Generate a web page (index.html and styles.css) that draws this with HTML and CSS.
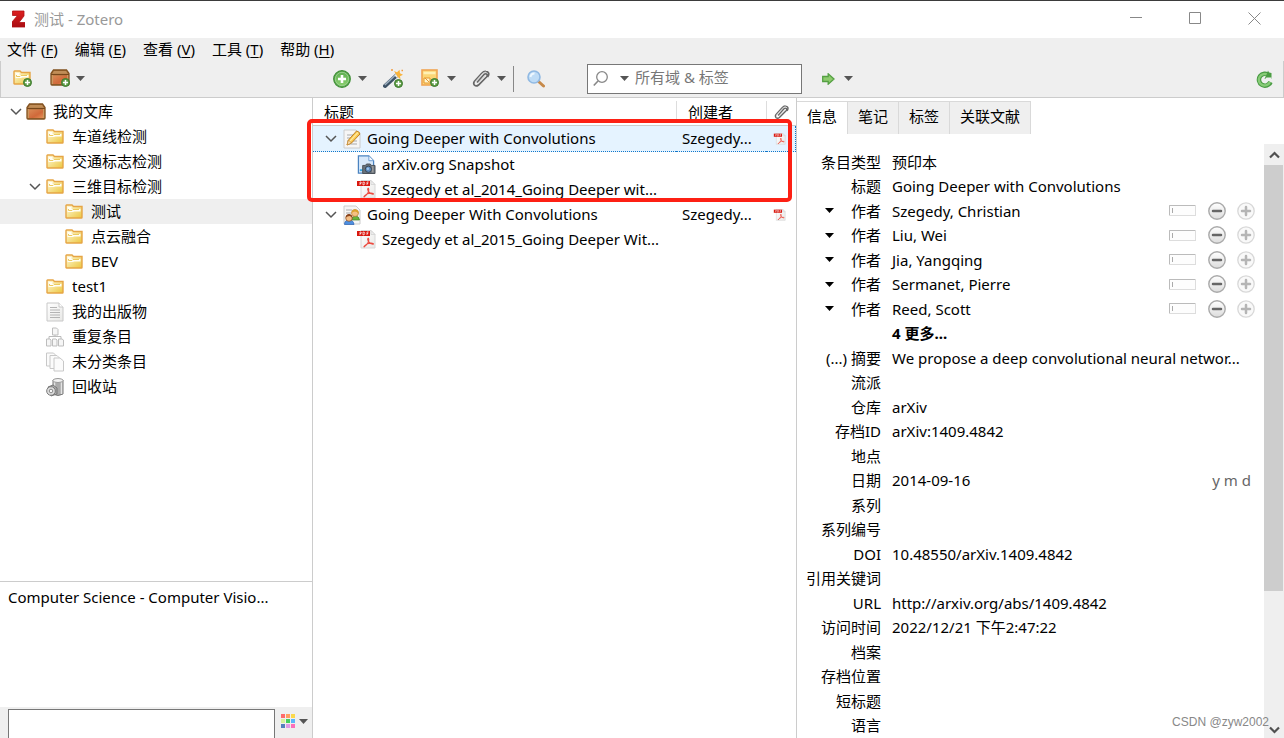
FILE: index.html
```html
<!DOCTYPE html>
<html lang="zh-CN">
<head>
<meta charset="utf-8">
<title>测试 - Zotero</title>
<link rel="stylesheet" href="styles.css">
</head>
<body>
<svg class="defs" aria-hidden="true">
  <defs>
    <linearGradient id="gFolder" x1="0" y1="0" x2="1" y2="1"><stop offset="0" stop-color="#fffbe0"/><stop offset="1" stop-color="#ecc63c"/></linearGradient>
    <linearGradient id="gBox" x1="0" y1="0" x2="1" y2="1"><stop offset="0" stop-color="#d98a55"/><stop offset="0.6" stop-color="#d0693a"/><stop offset="1" stop-color="#e58f56"/></linearGradient>
    <linearGradient id="gGreen" x1="0" y1="0" x2="0" y2="1"><stop offset="0" stop-color="#5faf52"/><stop offset="1" stop-color="#8ad06f"/></linearGradient>
    <linearGradient id="gRed" x1="0" y1="0" x2="0" y2="1"><stop offset="0" stop-color="#de2020"/><stop offset="1" stop-color="#a90d12"/></linearGradient>
    <linearGradient id="gGrey" x1="0" y1="0" x2="0" y2="1"><stop offset="0" stop-color="#fff"/><stop offset="1" stop-color="#dcdcdc"/></linearGradient>
    <linearGradient id="gPage" x1="0" y1="0" x2="1" y2="1"><stop offset="0" stop-color="#fff"/><stop offset="1" stop-color="#e8e8e6"/></linearGradient>
  </defs>
  <symbol id="plus" viewBox="0 0 9 9"><circle cx="4.500" cy="4.500" r="4" fill="#5d9c45" stroke="#3d7a2f"/><path d="M4.500 2v5M2 4.500h5" stroke="#fff" stroke-width="1.500"/></symbol>
  <symbol id="folder" viewBox="0 0 18 15"><path d="M1 13.500V1.500Q1 1 1.500 1H7l1.500 1.500h8.500V13.500Q17 14 16.500 14H1.500Q1 14 1 13.500Z" fill="url(#gFolder)" stroke="#e6a545" stroke-width="1.400"/><path d="M2.500 8V3h4v2h9v2.500H9L8 8Z" fill="#fffef5"/><path d="M3.500 5v1.500H7L8 5.500h6" fill="none" stroke="#eccb62"/></symbol>
  <symbol id="box" viewBox="0 0 20 17"><path d="M3.500 1h13L19 4.500V15q0 1-1 1H2q-1 0-1-1V4.500Z" fill="#a9733c" stroke="#81511f" stroke-width="1.300"/><path d="M4 2h12l1.800 2.800H2.200Z" fill="#c08d57"/><path d="M1 5.500h18" stroke="#76471b"/><rect x="3" y="6.500" width="14" height="8.500" fill="url(#gBox)"/><path d="M2.300 6v9M17.700 6v9" stroke="#d4a068"/></symbol>
  <symbol id="down" viewBox="0 0 9 5"><path d="M0 0h9L4.500 5Z" fill="currentColor"/></symbol>
  <symbol id="chev" viewBox="0 0 12 8"><path d="M1 1l5 5 5-5" fill="none" stroke="#555" stroke-width="1.500"/></symbol>
  <symbol id="clip" viewBox="0 0 18 18"><path d="M5 12.500L12 4.500q1.800-1.500 3 0 .7 1.200-.5 2.500L6.500 15q-2.200 1.800-4 .2-1.600-1.800 0-3.900L9.500 3.500q2.400-2.500 4.300-2.200 2 .2 2.700 1.500.9 2-1 4.200" fill="none" stroke="#666" stroke-width="1.700"/><path d="M3 12L10 4q2-2 4-2M6 13L13 5.500" fill="none" stroke="#d0d0d0" stroke-width=".9"/></symbol>
  <symbol id="pdf" viewBox="0 0 20 19"><path d="M5 .5h10l4 4V18H5Z" fill="url(#gPage)" stroke="#d8d8d8"/><path d="M15 .5v4h4Z" fill="#eee" stroke="#d0d0d0" stroke-width=".7"/><path d="M1 1h13v5H1Z" fill="#d9180f"/><path d="M4 5V2h1q1 .8 0 1.500H4M7 5V2q2-.2 1.700 1.500Q8.700 5 7 5M11 5V2h1.700M11 3.500h1.200" fill="none" stroke="#fff" stroke-width=".7"/><path d="M12 8q-.8 1.200.2 3 1.300 2.500 4.800 3.300 1-.7-.8-1.100-3.500-.3-5.800 1.200-2.200 1.700-2.700 2.600M12 8q1.500.8.200 4.200-1.300 2.800-4.500 5" fill="none" stroke="#ec4b40" stroke-width="1.100"/></symbol>
  <symbol id="page" viewBox="0 0 18 20"><path d="M1 1h12l4 4v14H1Z" fill="url(#gPage)" stroke="#c8c8c8"/><path d="M13 1v4h4" fill="#fff" stroke="#c8c8c8"/><path d="M4 5.500h7M4 8h10M4 10.500h10M4 13h10M4 15.500h10" stroke="#b4b4b4"/></symbol>
  <symbol id="swatch" viewBox="0 0 27 11"><rect x=".5" y=".5" width="26" height="10" fill="#fdfdfd" stroke="#ddd"/><path d="M.5 10V.5H26" stroke="#bbb" fill="none"/><path d="M3.500 3v5" stroke="#aaa"/></symbol>
  <symbol id="minus" viewBox="0 0 18 18"><circle cx="9" cy="9" r="8.200" fill="url(#gGrey)" stroke="#aaa" stroke-width="1.400"/><path d="M5 9h8" stroke="#666" stroke-width="2.500" stroke-linecap="round"/></symbol>
  <symbol id="add" viewBox="0 0 18 18"><circle cx="9" cy="9" r="8.200" fill="#f9f9f9" stroke="#d8d8d8" stroke-width="1.300"/><path d="M5 9h8M9 5v8" stroke="#b5b5b5" stroke-width="2.500" stroke-linecap="round"/></symbol>
</svg>

<header class="titlebar">
  <svg class="logo" viewBox="0 0 13 18"><path d="M.5 1H12v5L7 12.500H13V17H0v-5L5.500 5.500H.5Z" fill="url(#gRed)" stroke="#b01014" stroke-width=".8"/></svg>
  <h1 class="title">测试 - Zotero</h1>
  <div class="window-buttons">
    <button aria-label="最小化"><svg width="13" height="13"><path d="M0 5.500h12" stroke="#888"/></svg></button>
    <button aria-label="最大化"><svg width="13" height="13"><path d="M.5 .5h11v11H.5Z" fill="none" stroke="#888"/></svg></button>
    <button aria-label="关闭"><svg width="13" height="13"><path d="M.5 .5l12 12M12.500 .5l-12 12" stroke="#888"/></svg></button>
  </div>
</header>

<nav class="menubar">
  <button>文件 (<u>F</u>)</button><button>编辑 (<u>E</u>)</button><button>查看 (<u>V</u>)</button><button>工具 (<u>T</u>)</button><button>帮助 (<u>H</u>)</button>
</nav>

<div class="toolbar">
  <div class="tools tools-left">
    <button aria-label="新建分类"><svg width="20" height="19"><use href="#folder" y="1" width="18" height="15"/><use href="#plus" x="10" y="9" width="9" height="9"/></svg></button>
    <button class="with-menu" aria-label="新建文库"><svg width="21" height="19"><use href="#box" width="20" height="17"/><use href="#plus" x="11" y="9" width="9" height="9"/></svg><svg class="down"><use href="#down"/></svg></button>
  </div>
  <div class="tools tools-mid">
    <button class="with-menu" aria-label="新建条目"><svg width="18" height="18"><circle cx="9" cy="9" r="8.300" fill="#58a64b" stroke="#3f8f36" stroke-width="1.200"/><circle cx="9" cy="9" r="6.700" fill="url(#gGreen)" stroke="#a7d79a" stroke-width=".8"/><path d="M9 5v8M5 9h8" stroke="#fff" stroke-width="2.600"/></svg><svg class="down"><use href="#down"/></svg></button>
    <button aria-label="通过标识符添加条目"><svg width="22" height="20"><path d="M2 17L14 6" stroke="#3d5266" stroke-width="4" stroke-linecap="round"/><path d="M1.800 16L13 5.500" stroke="#9fb0bf" stroke-width="1.500"/><path d="M12.500 7.500l2.500-2" stroke="#e8eef2" stroke-width="3.500"/><path d="M11 2l3 1.200 2.500-2.400.5 3.500 3 1.500-3 1.500.5 3-3-2.500Z" fill="#f9b43c"/><path d="M8 1h2M18.500 1.500h1.500" stroke="#f29a3d" stroke-width="1.500"/><use href="#plus" x="11" y="10" width="9" height="9"/></svg></button>
    <button class="with-menu" aria-label="新建笔记"><svg width="19" height="19"><rect x="1" y="1" width="15" height="15" fill="#fbd676" stroke="#f0a553" stroke-width="1.600"/><path d="M2.500 4h12" stroke="#fff1b5" stroke-width="2.500"/><path d="M3 9v5h6V9Z" fill="#fff6cf" stroke="#e6982f"/><path d="M4 9l4 4" stroke="#e6982f"/><use href="#plus" x="9" y="9" width="9" height="9"/></svg><svg class="down"><use href="#down"/></svg></button>
    <button class="with-menu" aria-label="添加附件"><svg width="18" height="18"><use href="#clip"/></svg><svg class="down"><use href="#down"/></svg></button>
    <span class="separator"></span>
    <button class="find" aria-label="高级搜索"><svg width="18" height="18"><path d="M11 11l5.500 5" stroke="#c78a4a" stroke-width="3" stroke-linecap="round"/><circle cx="7" cy="7" r="6" fill="#bfdcf6" stroke="#90b9e3" stroke-width="1.600"/><path d="M3.500 7q.5-3.500 4-3.500" stroke="#edf7ff" fill="none" stroke-width="2"/></svg></button>
    <div class="search">
      <svg width="16" height="16"><circle cx="9" cy="6" r="5.300" fill="none" stroke="#888" stroke-width="1.300"/><path d="M5 10L.8 14.500" stroke="#888" stroke-width="1.600"/></svg>
      <svg class="down"><use href="#down"/></svg>
      <input type="search" aria-label="搜索" placeholder="所有域 &amp; 标签">
    </div>
  </div>
  <div class="tools tools-right">
    <button class="with-menu locate" aria-label="定位"><svg width="13" height="12"><path d="M.7 3.500h5.500V.8L12 6l-5.800 5.200V8.500H.7Z" fill="#8dcb6d" stroke="#55a043" stroke-width="1.300"/></svg><svg class="down"><use href="#down"/></svg></button>
    <button class="sync" aria-label="同步"><svg width="17" height="18"><path d="M14.500 12A6 6 0 1 1 13 5.200" fill="none" stroke="#489a42" stroke-width="4.500"/><path d="M14 12A5.800 5.800 0 1 1 12 5" fill="none" stroke="#87cb77" stroke-width="2.400"/><path d="M8.500 9L15.500 9V3L13 2.500l-1-2-1 3Z" fill="#4b9d43"/><path d="M8.500 9.500h7V7.500h-5Z" fill="#efefef"/></svg></button>
  </div>
</div>

<main class="panes">
  <section class="collections">
    <ul class="tree">
      <li class="root"><svg class="chev"><use href="#chev"/></svg><svg class="ico-box"><use href="#box"/></svg>我的文库</li>
      <li class="l1"><svg class="ico-folder"><use href="#folder"/></svg>车道线检测</li>
      <li class="l1"><svg class="ico-folder"><use href="#folder"/></svg>交通标志检测</li>
      <li class="l1 open"><svg class="chev"><use href="#chev"/></svg><svg class="ico-folder"><use href="#folder"/></svg>三维目标检测</li>
      <li class="l2 current"><svg class="ico-folder"><use href="#folder"/></svg>测试</li>
      <li class="l2"><svg class="ico-folder"><use href="#folder"/></svg>点云融合</li>
      <li class="l2"><svg class="ico-folder"><use href="#folder"/></svg>BEV</li>
      <li class="l1"><svg class="ico-folder"><use href="#folder"/></svg>test1</li>
      <li class="l1"><svg class="ico-page"><use href="#page"/></svg>我的出版物</li>
      <li class="l1"><svg class="ico-page" viewBox="0 0 18 20"><path d="M9 7v3M3 12v-2.500h12V12" stroke="#bbb" fill="none"/><g fill="#f6f6f6" stroke="#bdbdbd"><path d="M6.500 1h4l1.500 1.500V8H6.500ZM.5 12h3.500l1 1v6H.5ZM6.500 12H10l1 1v6H6.500ZM12.500 12H16l1.500 1v6h-5Z"/></g></svg>重复条目</li>
      <li class="l1"><svg class="ico-page" viewBox="0 0 18 20"><g fill="#fbfbfb" stroke="#c8c8c8"><path d="M.5 1h7l2.500 2.500V14H.5Z"/><path d="M4 3.500h7L13.500 6v10.500H4Z"/><path d="M8 6h6l3.500 3v10H8Z"/></g></svg>未分类条目</li>
      <li class="l1"><svg class="ico-page" viewBox="0 0 18 20"><path d="M7 3v14q5 3 10 0V3Z" fill="#aaa" stroke="#777"/><path d="M8.500 5v12M15.500 5v12" stroke="#e4e4e4" stroke-width="1.500"/><ellipse cx="12" cy="3.500" rx="5" ry="2" fill="#f2f2f2" stroke="#999"/><path d="M2 10l5-2 4 3v6l-6 2Z" fill="#aaa" stroke="#777"/><circle cx="5" cy="14" r="4.300" fill="#e0e0e0" stroke="#777"/><circle cx="5" cy="14" r="1.800" fill="#f8f8f8" stroke="#888"/></svg>回收站</li>
    </ul>
    <div class="tags">
      <button class="tag">Computer Science - Computer Visio...</button>
      <div class="tag-filter">
        <input type="text" aria-label="筛选标签">
        <button class="with-menu" aria-label="标签选项"><svg width="15" height="15"><path fill="#ff6b6b" d="M0 0h4v4H0z"/><path fill="#ff9f60" d="M5 0h4v4H5z"/><path fill="#fbd94c" d="M10 0h4v4h-4z"/><path fill="#d6f29d" d="M0 5h4v4H0z"/><path fill="#45cf5f" d="M5 5h4v4H5z"/><path fill="#5ab8fa" d="M10 5h4v4h-4z"/><path fill="#5580bd" d="M0 10h4v4H0z"/><path fill="#df9ae6" d="M5 10h4v4H5z"/><path fill="#fb70ba" d="M10 10h4v4h-4z"/></svg><svg class="down"><use href="#down"/></svg></button>
      </div>
    </div>
  </section>

  <section class="items">
    <table class="item-table">
      <thead><tr><th class="c-title">标题</th><th class="c-creator">创建者</th><th class="c-clip"><svg width="15" height="15"><use href="#clip"/></svg></th></tr></thead>
      <tbody>
        <tr class="selected"><td><div class="cell"><svg class="chev"><use href="#chev"/></svg><svg class="ico-item" viewBox="0 0 18 20"><path d="M1 1h12l4 4v14H1Z" fill="#f6f6f6" stroke="#ccc"/><path d="M4 6h8M4 9h8M4 12h10M4 15h10" stroke="#aaa"/><path d="M4 16l1.500-5L13.500 2q3 .5 3.500 3L8.500 14Z" fill="#fac850" stroke="#bf8124"/><path d="M4 16l1.500-5 3 3Z" fill="#f8ddb5" stroke="#bf8124" stroke-width=".6"/><path d="M7 12l8-8.500" stroke="#ffeaa0" stroke-width="1.200"/></svg>Going Deeper with Convolutions</div></td><td>Szegedy...</td><td><svg class="ico-pdf-s"><use href="#pdf"/></svg></td></tr>
        <tr><td><div class="cell child"><svg class="ico-pdf" viewBox="0 0 20 20"><path d="M2 1h11l5 5v13H2Z" fill="#d7e8fa" stroke="#4b83c0" stroke-width="1.300"/><path d="M13 1v5h5" fill="#f5faff" stroke="#6b9bd2"/><path d="M3.500 16h3" stroke="#32a8e4" stroke-width="2"/><path d="M6.500 11h3l1-1.500h4l1 1.500h4v8.500h-13Z" fill="#68727c" stroke="#4a4f55"/><path d="M17 11.500v7" stroke="#999" stroke-width="2"/><circle cx="12.500" cy="15" r="3.300" fill="#5d8cc1" stroke="#39434e"/><circle cx="12" cy="14.500" r="1.300" fill="#9cc4ec"/></svg>arXiv.org Snapshot</div></td><td></td><td></td></tr>
        <tr><td><div class="cell child"><svg class="ico-pdf"><use href="#pdf"/></svg>Szegedy et al_2014_Going Deeper wit...</div></td><td></td><td></td></tr>
        <tr><td><div class="cell"><svg class="chev"><use href="#chev"/></svg><svg class="ico-item" viewBox="0 0 18 20"><path d="M1 1h12l4 4v14H1Z" fill="#f6f6f6" stroke="#ccc"/><path d="M3 5h6M3 8h5" stroke="#aaa"/><path d="M8.500 15q.5-4 4-4t4 4Z" fill="#68b53c" stroke="#3f8227" stroke-width=".7"/><circle cx="12" cy="8" r="3.500" fill="#f5c184" stroke="#b37c32" stroke-width=".7"/><path d="M8.500 8q.5-4 4-3.500 3.500.5 3 4-2-2-3.500-2-2 .2-3.500 1.500Z" fill="#dba32c"/><path d="M1.500 19.500q0-4.500 4.500-4.500t5 4.500Z" fill="#4d8fe0" stroke="#2c62b0" stroke-width=".7"/><circle cx="6" cy="13" r="3.300" fill="#f3bd85" stroke="#8a4b1f" stroke-width=".7"/><path d="M2.700 12.500Q3 9 6.200 9q3 .5 3.200 4-1.500-2-3-2-2 0-3.700 1.500Z" fill="#8a431b"/></svg>Going Deeper With Convolutions</div></td><td>Szegedy...</td><td><svg class="ico-pdf-s"><use href="#pdf"/></svg></td></tr>
        <tr><td><div class="cell child"><svg class="ico-pdf"><use href="#pdf"/></svg>Szegedy et al_2015_Going Deeper Wit...</div></td><td></td><td></td></tr>
      </tbody>
    </table>
    <div class="highlight"></div>
  </section>

  <section class="details">
    <div class="tabs" role="tablist">
      <button role="tab" aria-selected="true">信息</button><button role="tab">笔记</button><button role="tab">标签</button><button role="tab">关联文献</button>
    </div>
    <div class="scroll-area">
      <table class="info">
        <tbody>
          <tr><th>条目类型</th><td>预印本</td></tr>
          <tr><th>标题</th><td>Going Deeper with Convolutions</td></tr>
          <tr><th><div class="author"><svg class="down"><use href="#down"/></svg>作者</div></th><td><div class="person">Szegedy, Christian<span class="acts"><button aria-label="切换单字段"><svg width="27" height="11"><use href="#swatch"/></svg></button><button aria-label="删除作者"><svg width="18" height="18"><use href="#minus"/></svg></button><button aria-label="添加作者"><svg width="18" height="18"><use href="#add"/></svg></button></span></div></td></tr>
          <tr><th><div class="author"><svg class="down"><use href="#down"/></svg>作者</div></th><td><div class="person">Liu, Wei<span class="acts"><button aria-label="切换单字段"><svg width="27" height="11"><use href="#swatch"/></svg></button><button aria-label="删除作者"><svg width="18" height="18"><use href="#minus"/></svg></button><button aria-label="添加作者"><svg width="18" height="18"><use href="#add"/></svg></button></span></div></td></tr>
          <tr><th><div class="author"><svg class="down"><use href="#down"/></svg>作者</div></th><td><div class="person">Jia, Yangqing<span class="acts"><button aria-label="切换单字段"><svg width="27" height="11"><use href="#swatch"/></svg></button><button aria-label="删除作者"><svg width="18" height="18"><use href="#minus"/></svg></button><button aria-label="添加作者"><svg width="18" height="18"><use href="#add"/></svg></button></span></div></td></tr>
          <tr><th><div class="author"><svg class="down"><use href="#down"/></svg>作者</div></th><td><div class="person">Sermanet, Pierre<span class="acts"><button aria-label="切换单字段"><svg width="27" height="11"><use href="#swatch"/></svg></button><button aria-label="删除作者"><svg width="18" height="18"><use href="#minus"/></svg></button><button aria-label="添加作者"><svg width="18" height="18"><use href="#add"/></svg></button></span></div></td></tr>
          <tr><th><div class="author"><svg class="down"><use href="#down"/></svg>作者</div></th><td><div class="person">Reed, Scott<span class="acts"><button aria-label="切换单字段"><svg width="27" height="11"><use href="#swatch"/></svg></button><button aria-label="删除作者"><svg width="18" height="18"><use href="#minus"/></svg></button><button aria-label="添加作者"><svg width="18" height="18"><use href="#add"/></svg></button></span></div></td></tr>
          <tr><th></th><td><b>4 更多...</b></td></tr>
          <tr><th>(...) 摘要</th><td>We propose a deep convolutional neural networ...</td></tr>
          <tr><th>流派</th><td></td></tr>
          <tr><th>仓库</th><td>arXiv</td></tr>
          <tr><th>存档ID</th><td>arXiv:1409.4842</td></tr>
          <tr><th>地点</th><td></td></tr>
          <tr><th>日期</th><td><div class="person">2014-09-16<span class="ymd">y m d</span></div></td></tr>
          <tr><th>系列</th><td></td></tr>
          <tr><th>系列编号</th><td></td></tr>
          <tr><th>DOI</th><td>10.48550/arXiv.1409.4842</td></tr>
          <tr><th>引用关键词</th><td></td></tr>
          <tr><th>URL</th><td>http://arxiv.org/abs/1409.4842</td></tr>
          <tr><th>访问时间</th><td>2022/12/21 下午2:47:22</td></tr>
          <tr><th>档案</th><td></td></tr>
          <tr><th>存档位置</th><td></td></tr>
          <tr><th>短标题</th><td></td></tr>
          <tr><th>语言</th><td></td></tr>
        </tbody>
      </table>
      <div class="scrollbar">
        <button aria-label="向上滚动"><svg width="11" height="8"><path d="M1 6.500l4.500-4.500 4.500 4.500" fill="none" stroke="#505050" stroke-width="2.200"/></svg></button>
        <div class="track"><div class="thumb"></div></div>
        <button class="end" aria-label="向下滚动"><svg width="11" height="8"><path d="M1 1.500l4.500 4.500 4.500-4.500" fill="none" stroke="#505050" stroke-width="2.200"/></svg></button>
      </div>
    </div>
  </section>
</main>
<div class="watermark">CSDN @zyw2002</div>
</body>
</html>
```
FILE: styles.css
```css
* { box-sizing: border-box; }

body {
  margin: 0;
  height: 100vh;
  overflow: hidden;
  display: flex;
  flex-direction: column;
  font-family: "Noto Sans", "Noto Sans CJK SC", sans-serif;
  font-size: 15px;
  line-height: 22px;
  color: #000;
  background: #fff;
}

svg { display: block; flex: none; }
.defs { position: absolute; width: 0; height: 0; }

button {
  display: flex;
  align-items: center;
  padding: 0;
  border: 0;
  background: none;
  font: inherit;
  color: inherit;
}

/* Title bar */
.titlebar {
  flex: none;
  height: 38px;
  display: flex;
  align-items: center;
  padding: 0 23px 2px 12px;
  border-top: 1px solid #3b3b3b;
}
.logo { width: 13px; height: 18px; }
.title {
  flex: 1;
  margin: 0 0 0 9px;
  font-size: 15px;
  font-weight: 400;
  color: #999;
}
.window-buttons { display: flex; gap: 46px; }

/* Menu bar */
.menubar {
  flex: none;
  height: 23px;
  display: flex;
  gap: 17px;
  padding: 0 0 2px 7px;
  background: #efefef;
}
.menubar button { white-space: pre; }
.menubar u { text-underline-offset: 2px; }

/* Toolbar */
.toolbar {
  flex: none;
  height: 37px;
  display: flex;
  background: #efefef;
  border: 1px solid #ccc;
  border-top: 0;
}
.tools { display: flex; align-items: center; padding-bottom: 1px; }
.tools-left { flex: none; width: 312px; gap: 17px; padding-left: 12px; }
.tools-mid { flex: 1; min-width: 0; padding-left: 20px; gap: 16px; }
.tools-right { flex: none; width: 481px; justify-content: space-between; padding-right: 10px; padding-left: 20px; }
.with-menu { gap: 7px; }
.down { width: 9px; height: 5px; color: #555; }
.tools-left .with-menu { gap: 5px; }
.locate { gap: 9px; }
.separator { width: 1px; height: 26px; background: #888; margin-left: -9px; }
.find { margin-right: 26px; margin-left: -3px; }
.search {
  flex: 1;
  min-width: 0;
  height: 30px;
  display: flex;
  align-items: center;
  padding-left: 5px;
  background: #fff;
  border: 1px solid #777;
}
.search .down { margin: 0 6px 0 11px; }
.search input {
  flex: 1;
  min-width: 0;
  border: 0;
  padding: 0 0 3px;
  outline: 0;
  background: none;
  font: inherit;
}
.search input::placeholder { color: #777; }

/* Panes */
.panes { flex: 1; min-height: 0; display: flex; }

.collections {
  flex: none;
  width: 313px;
  display: flex;
  flex-direction: column;
  border-right: 1px solid #ccc;
}
.tree {
  flex: 1;
  min-height: 0;
  margin: 0;
  padding: 1px 0 0;
  list-style: none;
}
.tree li {
  height: 25px;
  display: flex;
  align-items: center;
  gap: 8px;
  padding: 0 0 2px 10px;
}
.tree svg { margin-top: 2px; }
.tree .root { gap: 7px; }
.tree .root .ico-box { margin-left: -3px; }
.tree .l1 { padding-left: 46px; }
.tree .open { padding-left: 29px; }
.tree .open .chev { margin-right: -3px; }
.tree .l2 { padding-left: 65px; }
.tree .current { background: #efefef; }
.chev { width: 12px; height: 8px; }
.ico-box { width: 20px; height: 17px; }
.ico-folder { width: 18px; height: 15px; }
.ico-page { width: 18px; height: 20px; }

.tags {
  flex: none;
  height: 157px;
  display: flex;
  flex-direction: column;
  justify-content: space-between;
  border-top: 1px solid #ccc;
}
.tag { margin: 4px 8px; }
.tag-filter {
  height: 31px;
  display: flex;
  padding: 2px 4px 0 8px;
  gap: 6px;
  background: #efefef;
}
.tag-filter input {
  flex: 1;
  min-width: 0;
  height: 32px;
  border: 1px solid #777;
  font: inherit;
}
.tag-filter .with-menu { height: 24px; gap: 3px; }

.items { flex: 1; min-width: 0; position: relative; }
.item-table {
  width: 100%;
  table-layout: fixed;
  border-collapse: separate;
  border-spacing: 0;
}
.item-table th, .item-table td {
  padding: 0 0 2px;
  height: 25px;
  font-weight: 400;
  text-align: left;
  white-space: nowrap;
}
.item-table th {
  height: 28px;
  padding: 1px 0 0 11px;
  border-bottom: 1px solid #ccc;
}
.item-table th + th {
  background: linear-gradient(#ddd, #ddd) 0 3px / 1px 22px no-repeat;
}
.item-table .c-creator { width: 90px; padding-left: 12px; }
.item-table .c-clip { width: 30px; padding-left: 8px; }
.item-table td + td { padding-left: 6px; }
.item-table td + td + td { padding-left: 7px; }
.item-table td svg { margin-top: 2px; }
.item-table .selected td {
  height: 26px;
  background: #e5f3ff;
  border-bottom: 1px dotted #1177c9;
}
.item-table .selected td:last-child { border-right: 1px dotted #1177c9; }
.cell { height: 22px; display: flex; align-items: center; gap: 6px; padding-left: 12px; }
.cell.child { padding-left: 43px; }
.ico-item { width: 18px; height: 20px; }
.ico-pdf { width: 20px; height: 19px; }
.ico-pdf-s { width: 13px; height: 12px; }

/* Marker frame over the first item and its attachments */
.highlight {
  position: absolute;
  left: -6px;
  right: 4px;
  top: 21px;
  height: 83px;
  border: 4px solid #fd2014;
  border-radius: 5px;
}

/* Details */
.details {
  flex: none;
  width: 488px;
  display: flex;
  flex-direction: column;
  border-left: 1px solid #ccc;
}
.tabs { display: flex; padding-top: 3px; }
.tabs button {
  height: 33px;
  padding: 0 10px 4px;
  background: #efefef;
  border-top: 1px solid #d9d9d9;
  border-right: 1px solid #d9d9d9;
}
.tabs [aria-selected="true"] { background: #fff; }
.scroll-area { flex: 1; min-height: 0; display: flex; margin-top: 10px; overflow: hidden; }
.info {
  flex: 1;
  align-self: flex-start;
  margin-top: 5px;
  table-layout: fixed;
  border-collapse: collapse;
}
.info tr { height: 25px; }
.info tr:nth-child(even) { height: 24px; }
.info th {
  width: 84px;
  padding: 0;
  font-weight: 400;
  text-align: right;
  white-space: nowrap;
}
.info td { padding: 0 0 0 11px; white-space: nowrap; }
.author { display: flex; align-items: center; justify-content: space-between; padding-left: 28px; }
.author .down { color: #000; }
.person { display: flex; align-items: center; justify-content: space-between; padding-right: 9px; }
.acts { display: flex; align-items: center; gap: 11px; }
.acts button:first-child { margin-right: 1px; }
.ymd { color: #666; padding-right: 4px; }

.scrollbar {
  flex: none;
  width: 20px;
  display: flex;
  flex-direction: column;
  background: #efefef;
}
.scrollbar button { height: 21px; justify-content: center; }
.track { flex: 1; display: flex; flex-direction: column; }
.thumb { flex: 13; margin-right: 1px; background: #cdcdcd; }
.track::after { content: ""; flex: 4; }
.scrollbar .end { height: 16px; }

.watermark {
  position: absolute;
  right: 15px;
  bottom: 6px;
  font-family: "Liberation Sans", sans-serif;
  font-size: 12px;
  line-height: 20px;
  color: #888;
}
```
